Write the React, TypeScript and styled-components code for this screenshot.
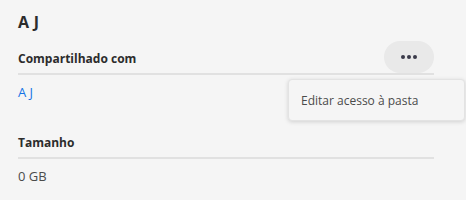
import React from "react";
import styled, { createGlobalStyle } from "styled-components";

const GlobalStyle = createGlobalStyle`
  html, body {
    margin: 0;
    padding: 0;
    background: #f5f5f5;
  }
  body {
    font-family: "Open Sans", "Noto Sans", sans-serif;
    color: #2c2c2c;
  }
`;

const App = () => {
  return (
    <>
      <GlobalStyle />
      <Panel>
        <Title>A J</Title>
        <Section>
          <Header>
            <Label>Compartilhado com</Label>
            <MoreButton aria-label="Mais ações">
              <Dots>
                <span />
                <span />
                <span />
              </Dots>
            </MoreButton>
          </Header>
          <Value link>A J</Value>
          <Menu>
            <MenuItem>Editar acesso à pasta</MenuItem>
          </Menu>
        </Section>
        <Section>
          <Header>
            <Label>Tamanho</Label>
          </Header>
          <Value>0 GB</Value>
        </Section>
      </Panel>
    </>
  );
};

const Panel = styled.div`
  position: relative;
  width: 466px;
  height: 200px;
  box-sizing: border-box;
  padding: 11px 32px 0 18px;
  display: flex;
  flex-direction: column;
`;

const Title = styled.h1`
  margin: 0;
  font-size: 16px;
  font-weight: 700;
  line-height: 22px;
  letter-spacing: 0.3px;
  color: #2c2c2c;
  margin-bottom: 8px;
`;

const Section = styled.div`
  display: flex;
  flex-direction: column;
  margin-bottom: 23px;
`;

const Header = styled.div`
  display: flex;
  align-items: center;
  justify-content: space-between;
  height: 32px;
  border-bottom: 2px solid #e1e1e1;
`;

const Label = styled.span`
  font-size: 12px;
  font-weight: 700;
  color: #2c2c2c;
  padding-top: 3px;
`;

const MoreButton = styled.button`
  width: 50px;
  height: 32px;
  border: none;
  border-radius: 16px;
  background: #e9e9e9;
  display: flex;
  align-items: center;
  justify-content: center;
  padding: 0;
  cursor: pointer;
`;

const Dots = styled.div`
  display: flex;
  gap: 2px;
  span {
    width: 4px;
    height: 4px;
    border-radius: 50%;
    background: #3a3a4a;
  }
`;

const Value = styled.div<{ link?: boolean }>`
  font-size: 13px;
  line-height: 20px;
  margin-top: 7px;
  color: ${(props) => (props.link ? "#1473e6" : "#4b4b4b")};
`;

const Menu = styled.div`
  position: absolute;
  top: 79px;
  right: 1px;
  width: 177px;
  height: 42px;
  box-sizing: border-box;
  background: #f5f5f5;
  border: 1px solid #e3e3e3;
  border-radius: 4px;
  box-shadow: 0 1px 4px rgba(0, 0, 0, 0.15);
  display: flex;
  align-items: center;
`;

const MenuItem = styled.div`
  padding-left: 12px;
  font-size: 12px;
  color: #4b4b4b;
`;

export default App;
